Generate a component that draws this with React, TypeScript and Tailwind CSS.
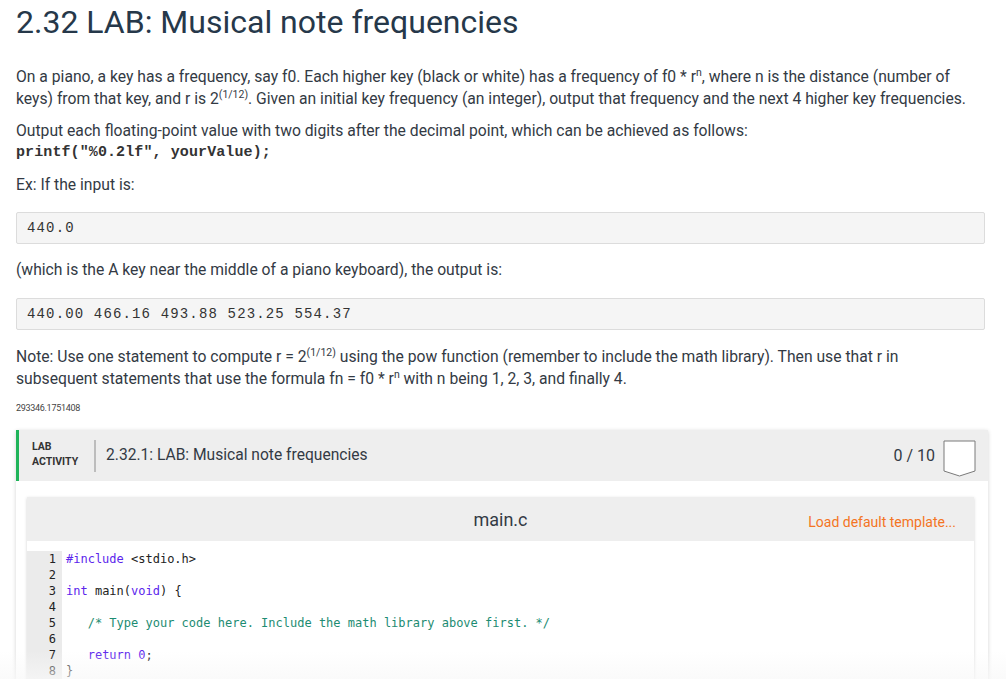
import React from 'react'

const body = "font-['Roboto',sans-serif]"
const mono = "font-['Liberation_Mono','Courier_New',monospace]"
const codeFont = "font-['DejaVu_Sans_Mono',Menlo,monospace]"

const kw = 'text-[#5b25ec]'
const cm = 'text-[#1d8c72]'

const codeLines: React.ReactNode[] = [
  <><span className={kw}>#include</span> &lt;stdio.h&gt;</>,
  <></>,
  <><span className={kw}>int</span> main(<span className={kw}>void</span>) {'{'}</>,
  <></>,
  <>   <span className={cm}>/* Type your code here. Include the math library above first. */</span></>,
  <></>,
  <>   <span className={kw}>return</span> <span className={kw}>0</span>;</>,
  <>{'}'}</>,
]

function Sup({ children }: { children: React.ReactNode }) {
  return <span className="text-[10.5px] leading-none align-[6px]">{children}</span>
}

function Pre({ children }: { children: React.ReactNode }) {
  return (
    <div className={`${mono} text-[14px] tracking-[1.15px] text-[#333] bg-[#f5f5f5] border border-[#dcdcdc] rounded-[2px] h-[32px] flex items-center px-[10px]`}>
      {children}
    </div>
  )
}

export default function App() {
  return (
    <div className={`${body} relative w-[1006px] h-[679px] overflow-hidden bg-white text-[#333a44]`}>
      <div className="pl-[16px] pr-[21px]">
        <h1 className="text-[32px] leading-[40px] pt-[2px] text-[#26384a]">
          2.32 LAB: Musical note frequencies
        </h1>

        <p className="mt-[24px] max-w-[958px] text-[15.7px] leading-[22px]">
          On a piano, a key has a frequency, say f0. Each higher key (black or white) has a frequency of f0 * r<Sup>n</Sup>, where n is the distance (number of keys) from that key, and r is 2<Sup>(1/12)</Sup>. Given an initial key frequency (an integer), output that frequency and the next 4 higher key frequencies.
        </p>
        <p className="mt-[10px] max-w-[958px] text-[15.7px] leading-[22px]">
          Output each floating-point value with two digits after the decimal point, which can be achieved as follows:
        </p>
        <div className={`${mono} text-[15px] leading-[22px] font-bold text-[#333] tracking-[0.1px]`}>printf("%0.2lf", yourValue);</div>
        <p className="mt-[10px] text-[15.7px] leading-[22px]">Ex: If the input is:</p>

        <div className="mt-[16px]">
          <Pre>440.0</Pre>
        </div>
        <p className="mt-[15px] text-[15.7px] leading-[22px]">
          (which is the A key near the middle of a piano keyboard), the output is:
        </p>
        <div className="mt-[17px]">
          <Pre>440.00 466.16 493.88 523.25 554.37</Pre>
        </div>

        <p className="mt-[16px] max-w-[958px] text-[15.7px] leading-[22px]">
          Note: Use one statement to compute r = 2<Sup>(1/12)</Sup> using the pow function (remember to include the math library). Then use that r in subsequent statements that use the formula fn = f0 * r<Sup>n</Sup> with n being 1, 2, 3, and finally 4.
        </p>
        <div className="mt-[11px] text-[9px] leading-[14px] text-[#444] tracking-[-0.3px]">293346.1751408</div>

        <div className="mt-[15px] mr-[-3px] bg-white shadow-[0_1px_4px_rgba(0,0,0,0.18)]">
          <div className="h-[51px] bg-[#eeeeee] border-l-[3px] border-[#1fb45a] flex items-center pl-[13px] pr-[12px]">
            <div className="text-[10.5px] leading-[15px] font-bold text-[#333] uppercase w-[52px] mb-[3px]">
              <div>Lab</div>
              <div>Activity</div>
            </div>
            <div className="w-[2px] h-[32px] bg-[#bdbdbd] mx-[10px]" />
            <div className="text-[15.6px] text-[#333a44] flex-1">2.32.1: LAB: Musical note frequencies</div>
            <div className="text-[16px] text-[#333a44] mr-[8px]">0 / 10</div>
            <svg width="33" height="39" viewBox="0 0 33 39" className="mt-[7px]">
              <path d="M1 1 H32 V31 L16.5 36 L1 31 Z" fill="white" stroke="#7a7a7a" strokeWidth="1" />
            </svg>
          </div>

          <div className="pl-[11px] pr-[14px] pt-[16px] pb-[20px]">
            <div className="shadow-[0_1px_3px_rgba(0,0,0,0.18)]">
              <div className="h-[44px] bg-[#eeeeee] flex items-center relative">
                <div className="flex-1 text-center text-[18px] text-[#333a44]">main.c</div>
                <div className="absolute right-[18px] top-[15px] text-[14px] text-[#f47423]">Load default template...</div>
              </div>
              <div className={`${codeFont} flex text-[12px] leading-[16px] bg-white pt-[10px] pb-[10px]`}>
                <div className="w-[35px] bg-[#ebebeb] text-right pr-[6px] text-[#222]">
                  {codeLines.map((_, i) => (
                    <div key={i}>{i + 1}</div>
                  ))}
                </div>
                <div className="pl-[4px] text-[#222] whitespace-pre">
                  {codeLines.map((l, i) => (
                    <div key={i} className="h-[16px]">{l}</div>
                  ))}
                </div>
              </div>
            </div>
          </div>
        </div>
      </div>

      <div className="absolute left-0 right-0 bottom-0 h-[28px] bg-gradient-to-b from-transparent to-[#f8f8f8]/70 pointer-events-none" />
    </div>
  )
}
